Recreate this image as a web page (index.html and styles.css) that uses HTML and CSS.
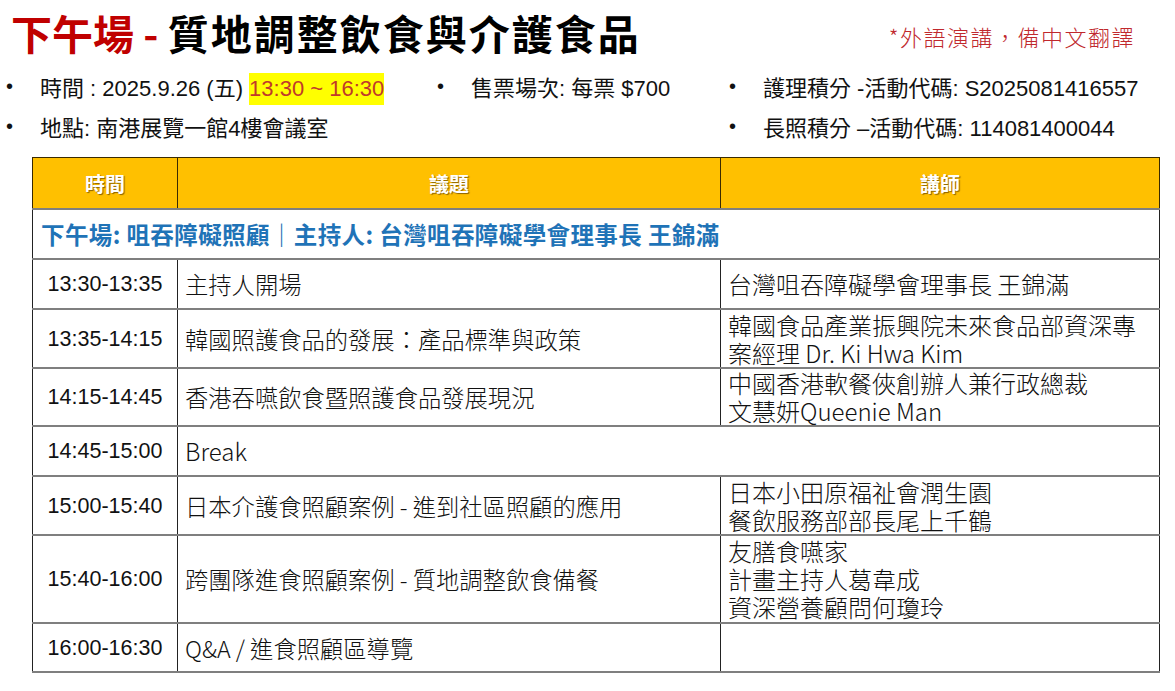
FILE: index.html
```html
<!DOCTYPE html>
<html lang="zh-Hant">
<head>
<meta charset="utf-8">
<title>下午場 - 質地調整飲食與介護食品</title>
<link rel="stylesheet" href="styles.css">
</head>
<body>
<div class="page">
  <header class="top">
    <h1 class="title"><span class="title-red">下午場 -</span> <span class="title-black">質地調整飲食與介護食品</span></h1>
    <div class="note">*外語演講，備中文翻譯</div>
  </header>
  <div class="info">
    <div class="item"><span class="dot">•</span><span>時間 : 2025.9.26 (五) <mark class="hl">13:30 ~ 16:30</mark></span></div>
    <div class="item"><span class="dot">•</span><span>售票場次: 每票 $700</span></div>
    <div class="item"><span class="dot">•</span><span>護理積分 -活動代碼: S2025081416557</span></div>
    <div class="item"><span class="dot">•</span><span>地點: 南港展覽一館4樓會議室</span></div>
    <div class="item"></div>
    <div class="item"><span class="dot">•</span><span>長照積分 –活動代碼: 114081400044</span></div>
  </div>
  <table class="agenda">
    <colgroup><col class="c1"><col class="c2"><col class="c3"></colgroup>
    <thead>
      <tr class="head"><th>時間</th><th>議題</th><th>講師</th></tr>
    </thead>
    <tbody>
      <tr class="section"><td colspan="3">下午場: 咀吞障礙照顧｜主持人: 台灣咀吞障礙學會理事長 王錦滿</td></tr>
      <tr class="r50"><td class="time">13:30-13:35</td><td class="topic">主持人開場</td><td class="spk">台灣咀吞障礙學會理事長 王錦滿</td></tr>
      <tr class="r59"><td class="time">13:35-14:15</td><td class="topic">韓國照護食品的發展：產品標準與政策</td><td class="spk">韓國食品產業振興院未來食品部資深專<br>案經理 Dr. Ki Hwa Kim</td></tr>
      <tr class="r58"><td class="time">14:15-14:45</td><td class="topic">香港吞嚥飲食暨照護食品發展現況</td><td class="spk">中國香港軟餐俠創辦人兼行政總裁<br>文慧妍Queenie Man</td></tr>
      <tr class="r50"><td class="time">14:45-15:00</td><td class="topic brk" colspan="2">Break</td></tr>
      <tr class="r59"><td class="time">15:00-15:40</td><td class="topic">日本介護食照顧案例 - 進到社區照顧的應用</td><td class="spk">日本小田原福祉會潤生園<br>餐飲服務部部長尾上千鶴</td></tr>
      <tr class="r88"><td class="time">15:40-16:00</td><td class="topic">跨團隊進食照顧案例 - 質地調整飲食備餐</td><td class="spk">友膳食嚥家<br>計畫主持人葛韋成<br>資深營養顧問何瓊玲</td></tr>
      <tr class="r49"><td class="time">16:00-16:30</td><td class="topic">Q&amp;A / 進食照顧區導覽</td><td class="spk"></td></tr>
    </tbody>
  </table>
</div>
</body>
</html>
```
FILE: styles.css
```css
html, body {
  margin: 0;
  padding: 0;
  background: #ffffff;
}
body {
  font-family: "Liberation Sans", "Noto Sans CJK TC", sans-serif;
  color: #111;
}
.page {
  width: 1175px;
  height: 691px;
  overflow: hidden;
}
.top {
  display: flex;
  align-items: center;
  justify-content: space-between;
  padding: 6px 40px 0 11px;
  height: 58px;
  box-sizing: border-box;
}
.title {
  margin: 0;
  font-family: "Noto Sans CJK TC", sans-serif;
  font-weight: 700;
  font-size: 41px;
  line-height: 48px;
  white-space: nowrap;
}
.title-red {
  color: #c00000;
}
.title-black {
  color: #000;
  font-size: 41px;
  letter-spacing: 2px;
}
.note {
  font-family: "Noto Sans CJK TC", sans-serif;
  color: #c0282d;
  font-size: 22px;
  font-weight: 300;
  margin-top: 8px;
  letter-spacing: 1.5px;
}
.info {
  display: grid;
  grid-template-columns: 431px 292px 1fr;
  grid-auto-rows: 40px;
  padding: 8px 0 0 6px;
  font-size: 22px;
  color: #111;
}
.item {
  display: flex;
  align-items: center;
  white-space: nowrap;
}
.dot {
  width: 34px;
  font-size: 20px;
  line-height: 1;
}
.hl {
  background: #ffff00;
  color: #c0392b;
  padding: 3px 0 4px;
}
.agenda {
  margin: 11px 0 0 32px;
  width: 1127px;
  border-collapse: collapse;
  table-layout: fixed;
  font-family: "Noto Sans CJK TC", sans-serif;
  font-size: 23px;
  color: #111;
}
.c1 { width: 145px; }
.c2 { width: 543px; }
.c3 { width: 439px; }
.agenda th {
  background: #ffc000;
  color: #ffffff;
  font-weight: 700;
  font-size: 20px;
  height: 50px;
  padding: 0;
  border: 1.5px solid #3a2a00;
  text-shadow: 1px 1px 1px rgba(90, 60, 0, 0.7);
}
.agenda td {
  border-top: 2px solid #7f7f7f;
  border-bottom: 2px solid #7f7f7f;
  border-left: 1.5px solid #222;
  border-right: 1.5px solid #222;
  padding: 0 7px;
  vertical-align: middle;
  line-height: 28px;
}
.section td {
  height: 48px;
  color: #1f73b7;
  font-weight: 700;
  font-size: 23.5px;
  padding-left: 8px;
  letter-spacing: 0.4px;
}
.r50 td { height: 48px; }
.r59 td { height: 57px; }
.r58 td { height: 56px; }
.r88 td { height: 86px; }
.r49 td { height: 47px; }
.agenda td.time {
  font-family: "Liberation Sans", sans-serif;
  font-size: 21.5px;
  text-align: center;
  padding: 0;
}
.topic {
  font-size: 23.3px;
  font-weight: 300;
}
.brk {
  font-size: 24px;
}
.spk {
  font-size: 24px;
  font-weight: 300;
  padding-top: 0;
  padding-bottom: 0;
}
```
